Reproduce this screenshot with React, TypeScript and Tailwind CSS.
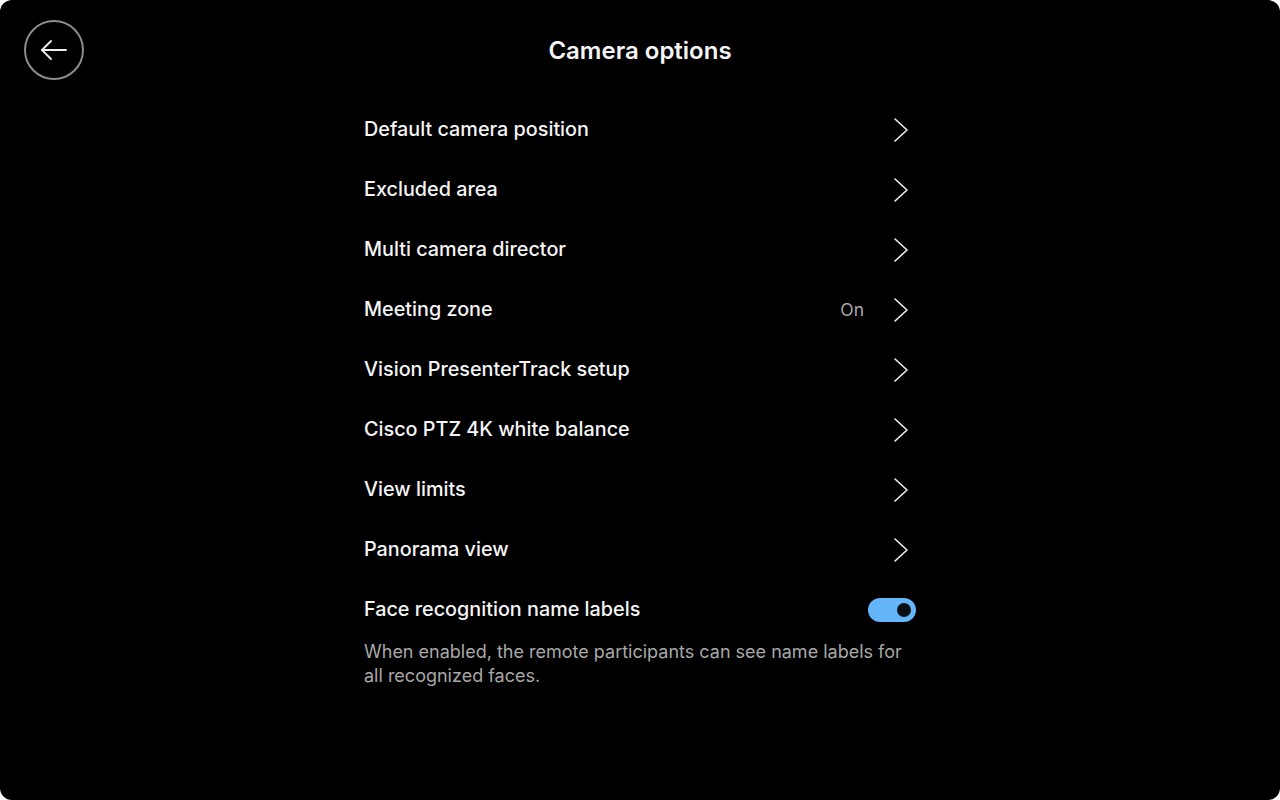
const rows: { label: string; value?: string }[] = [
  { label: "Default camera position" },
  { label: "Excluded area" },
  { label: "Multi camera director" },
  { label: "Meeting zone", value: "On" },
  { label: "Vision PresenterTrack setup" },
  { label: "Cisco PTZ 4K white balance" },
  { label: "View limits" },
  { label: "Panorama view" },
];

function Chevron() {
  return (
    <svg width="16" height="26" viewBox="0 0 16 26" fill="none" stroke="#f2f2f2" strokeWidth="1.6" strokeLinecap="round" strokeLinejoin="round">
      <path d="M2 2l12 11L2 24" />
    </svg>
  );
}

export default function App() {
  return (
    <div className="h-screen w-full bg-white" style={{ fontFamily: "Inter, 'Noto Sans', sans-serif" }}>
      <div className="flex h-full flex-col rounded-[12px] bg-black text-white">
        {/* header */}
        <div className="grid h-[100px] grid-cols-[1fr_auto_1fr] items-center px-6 pt-[1px]">
          <button
            type="button"
            className="mt-[-1px] flex h-[60px] w-[60px] items-center justify-center rounded-full border-2 border-[#8c8c8c]"
          >
            <svg width="28" height="24" viewBox="0 0 28 24" fill="none" stroke="#f0f0f0" strokeWidth="1.8" strokeLinecap="round" strokeLinejoin="round">
              <path d="M26 12H2" />
              <path d="M11 3l-9 9 9 9" />
            </svg>
          </button>
          <h1 className="text-[24px] font-semibold text-[#f5f5f5]">Camera options</h1>
          <div />
        </div>

        {/* list */}
        <div className="mx-auto w-[552px]">
          {rows.map((r) => (
            <div key={r.label} className="flex h-[60px] items-center justify-between">
              <span className="text-[19.8px] font-medium text-[#f5f5f5]">{r.label}</span>
              <div className="flex items-center gap-[29px]">
                {r.value && <span className="text-[17.5px] text-[#a8a8a8]">{r.value}</span>}
                <span className="mr-[7px] flex">
                  <Chevron />
                </span>
              </div>
            </div>
          ))}
          <div className="flex h-[60px] items-center justify-between">
            <span className="text-[19.8px] font-medium text-[#f5f5f5]">Face recognition name labels</span>
            <div className="flex h-[24px] w-[48px] items-center justify-end rounded-full bg-[#64b5fa] pr-[5px]">
              <span className="h-[14px] w-[14px] rounded-full bg-[#0a0f14]" />
            </div>
          </div>
          <p className="text-[18px] leading-[24px] text-[#a8a8a8]">
            When enabled, the remote participants can see name labels for all recognized faces.
          </p>
        </div>
      </div>
    </div>
  );
}
